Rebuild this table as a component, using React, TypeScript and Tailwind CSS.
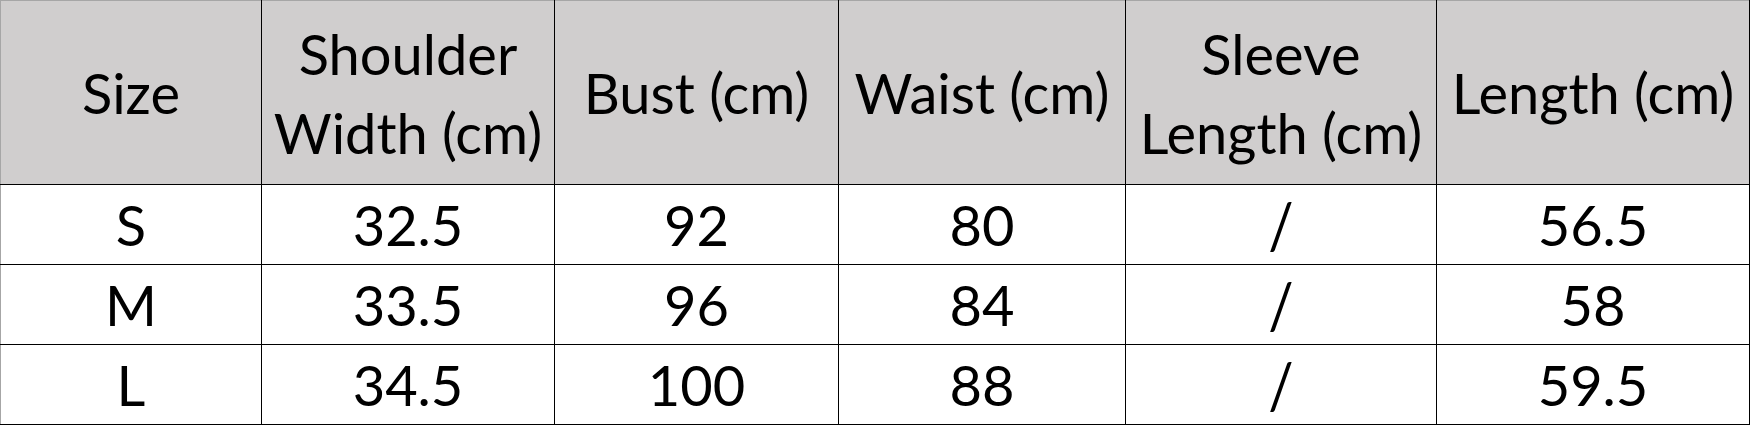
import React from "react";

const headers: React.ReactNode[] = [
  "Size",
  <>Shoulder<br />Width (cm)</>,
  "Bust (cm)",
  "Waist (cm)",
  <>Sleeve<br />Length (cm)</>,
  "Length (cm)",
];

const widths = ["w-[261px]", "w-[293px]", "w-[284px]", "w-[287px]", "w-[311px]", "w-[313px]"];

const rows = [
  ["S", "32.5", "92", "80", "/", "56.5"],
  ["M", "33.5", "96", "84", "/", "58"],
  ["L", "34.5", "100", "88", "/", "59.5"],
];

export default function App() {
  return (
    <div className="w-[1750px] h-[427px] bg-white overflow-hidden">
      <table
        className="table-fixed border-collapse w-[1749px] text-black text-[56px]"
        style={{ fontFamily: "Lato, 'Open Sans', sans-serif" }}
      >
        <thead>
          <tr className="h-[184px] bg-[#d0cece]">
            {headers.map((h, i) => (
              <th
                key={i}
                className={`${widths[i]} font-normal text-center align-middle leading-[79px] border border-black border-t-[#a6a6a6] ${i === 0 ? "border-l-[#a6a6a6]" : ""}`}
              >
                {h}
              </th>
            ))}
          </tr>
        </thead>
        <tbody>
          {rows.map((r, ri) => (
            <tr key={ri} className="h-[80px]">
              {r.map((c, ci) => (
                <td
                  key={ci}
                  className={`text-center align-middle leading-none border border-black ${ci === 0 ? "border-l-[#a6a6a6]" : ""}`}
                >
                  {c === "/" ? <span className="inline-block scale-y-115">/</span> : c}
                </td>
              ))}
            </tr>
          ))}
        </tbody>
      </table>
    </div>
  );
}
